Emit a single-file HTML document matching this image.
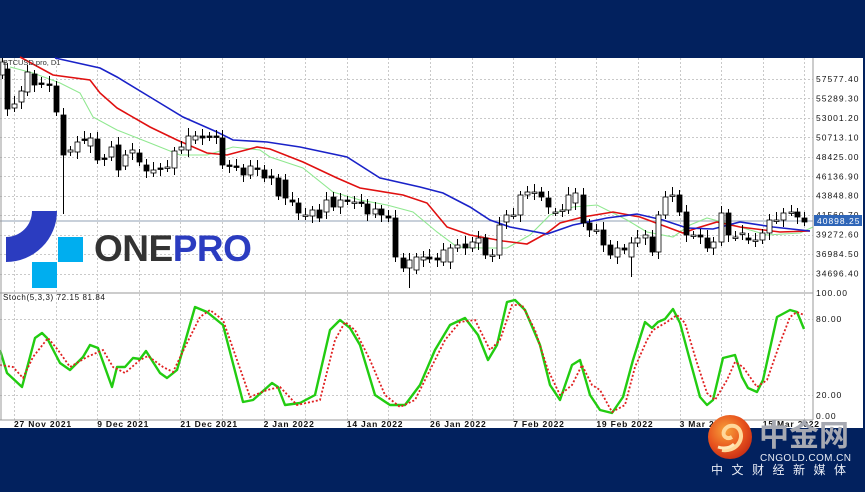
<!DOCTYPE html>
<html><head><meta charset="utf-8">
<style>
html,body{margin:0;padding:0;width:865px;height:487px;overflow:hidden;background:#02215e;font-family:"Liberation Sans",sans-serif;}
#wrap{position:absolute;left:0;top:0;width:865px;height:487px;}
svg text{font-family:"Liberation Sans",sans-serif;}
</style></head><body>
<div id="wrap">
<svg id="s" width="865" height="487" viewBox="0 0 865 487" xmlns="http://www.w3.org/2000/svg">
<rect x="0" y="0" width="865" height="487" fill="#02215e"/>
<rect x="0" y="58" width="863" height="370" fill="#ffffff"/>
<g id="grid" stroke="#c9c9c9" stroke-width="1" stroke-dasharray="2,2"></g>
<line x1="0" y1="221" x2="813" y2="221" stroke="#a8b4c4" stroke-width="1.2"/>
<g id="ma" fill="none" stroke-width="1.6"></g>
<g id="candles"></g>
<g id="stoch" fill="none"></g>
<line x1="0" y1="293" x2="813" y2="293" stroke="#999" stroke-width="1"/>
<line x1="0" y1="420" x2="813" y2="420" stroke="#999" stroke-width="1"/>
<line x1="813" y1="58" x2="813" y2="420" stroke="#999" stroke-width="1"/>
<line x1="1" y1="58" x2="1" y2="420" stroke="#999" stroke-width="1"/>
<g id="plabels" font-size="8.5" fill="#111" letter-spacing="1"></g>
<rect x="814" y="215" width="48" height="11" fill="#2f66b8"/>
<text x="817" y="224" font-size="8.5" fill="#fff" letter-spacing="1">40898.25</text>
<text x="3" y="65" font-size="7.5" fill="#333">BTCUSD.pro, D1</text>
<text x="3" y="300" font-size="8" fill="#111" letter-spacing="0.6">Stoch(5,3,3) 72.15 81.84</text>
<g id="dlabels" font-size="8.5" fill="#111" letter-spacing="0.8" font-weight="bold"></g>
<!-- ONEPRO logo -->
<path d="M6 262 A51 51 0 0 0 57 211 L32 211 A26 26 0 0 1 6 237 Z" fill="#2b3cc0"/>
<rect x="58" y="237" width="25" height="25" fill="#00aeef"/>
<rect x="32" y="262" width="25" height="26" fill="#00aeef"/>
<text x="94" y="261" font-size="37" font-weight="bold" fill="#333" letter-spacing="-0.5">ONE<tspan fill="#2b3cc0">PRO</tspan></text>
<!-- cngold logo -->
<defs><radialGradient id="g1" cx="0.4" cy="0.35" r="0.7"><stop offset="0" stop-color="#f7a23a"/><stop offset="0.6" stop-color="#e8531e"/><stop offset="1" stop-color="#c62d14"/></radialGradient></defs>
<circle cx="730" cy="437" r="22" fill="url(#g1)"/>
<path d="M722 450 C736 452 744 440 740 431 C737 424 727 424 724 431 C722 436 727 440 732 437" fill="none" stroke="#ffd89a" stroke-width="4"/>
<path d="M718 447 C724 449 730 448 734 444" fill="none" stroke="#ffe7b8" stroke-width="3"/>
<text x="759" y="446" font-size="30" font-weight="bold" fill="#a6a9b2" font-family="'Liberation Sans','Noto Sans CJK SC',sans-serif" style="font-family:'Liberation Sans','Noto Sans CJK SC',sans-serif">中金网</text>
<text x="760" y="461" font-size="10" fill="#e8ecf5" letter-spacing="0.4">CNGOLD.COM.CN</text>
<text x="711" y="474" font-size="12" fill="#e8ecf5" letter-spacing="8.5" style="font-family:'Liberation Sans','Noto Sans CJK SC',sans-serif">中文财经新媒体</text>
</svg>
</div>
<script>
var NS="http://www.w3.org/2000/svg";
function el(p,t,a){var e=document.createElementNS(NS,t);for(var k in a)e.setAttribute(k,a[k]);p.appendChild(e);return e;}
var grid=document.getElementById('grid');
for(var k=0;k<20;k++){var x=Math.round(14+41.6*k)+0.5;if(x>812)break;el(grid,'line',{x1:x,y1:58,x2:x,y2:420});}
var prices=["57577.40","55289.30","53001.20","50713.10","48425.00","46136.90","43848.80","41560.70","39272.60","36984.50","34696.40"];
var pl=document.getElementById('plabels');
for(var i=0;i<prices.length;i++){var y=79+19.45*i;el(grid,'line',{x1:0,y1:Math.round(y)+0.5,x2:813,y2:Math.round(y)+0.5});
 var t=el(pl,'text',{x:816,y:y+3});t.textContent=prices[i];}
[[319,"80.00"],[395,"20.00"]].forEach(function(a){el(grid,'line',{x1:0,y1:a[0]+0.5,x2:813,y2:a[0]+0.5});});
[[296,"100.00"],[322,"80.00"],[398,"20.00"],[419,"0.00"]].forEach(function(a){var t=el(pl,'text',{x:816,y:a[0]});t.textContent=a[1];});
var dl=document.getElementById('dlabels');
["27 Nov 2021","9 Dec 2021","21 Dec 2021","2 Jan 2022","14 Jan 2022","26 Jan 2022","7 Feb 2022","19 Feb 2022","3 Mar 2022","15 Mar 2022"].forEach(function(s,i){var t=el(dl,'text',{x:14+83.2*i,y:427});t.textContent=s;});
function poly(g,pts,col,extra){var a={points:pts.map(function(p){return p.join(',')}).join(' '),stroke:col};for(var k in extra)a[k]=extra[k];el(g,'polyline',a);}
var ma=document.getElementById('ma');
poly(ma,[[10,67],[33,73],[60,83],[80,93],[93,117],[117,130],[150,143],[180,155],[207,155],[233,147],[260,150],[270,157],[303,168],[333,192],[360,200],[387,205],[413,212],[437,232],[457,247],[483,248],[507,248],[530,235],[550,215],[573,207],[597,205],[627,220],[647,232],[673,237],[690,225],[707,218],[733,225],[767,235],[800,233],[813,227]],'#90e890',{'stroke-width':1.1});
poly(ma,[[20,57],[53,75],[90,80],[100,93],[117,108],[150,127],[177,140],[207,153],[227,155],[257,147],[270,149],[303,162],[337,178],[360,188],[403,195],[427,203],[447,227],[470,235],[503,241],[527,244],[547,233],[560,223],[583,217],[613,212],[640,217],[683,233],[697,228],[717,222],[740,227],[780,232],[810,231]],'#e01010');
poly(ma,[[55,58],[100,68],[117,77],[150,97],[183,117],[217,132],[233,140],[267,142],[300,147],[347,157],[380,178],[420,187],[443,193],[470,207],[490,220],[510,227],[547,234],[573,225],[607,218],[637,214],[663,220],[687,228],[713,229],[740,222],[773,227],[810,231]],'#1a22c8');
var C=[[2,75,62],[7,69,109],[14,108,104],[21,102,91],[27,92,72],[34,74,85],[41,83,84],[49,84,85],[56,86,112],[63,115,155],[70,152,150],[77,152,142],[84,139,140],[90,146,138],[97,139,160],[104,158,159],[111,157,147],[118,145,170],[125,166,155],[132,153,150],[139,153,162],[146,165,171],[153,173,170],[160,168,169],[167,168,167],[174,168,151],[181,150,147],[188,150,136],[195,140,136],[202,136,138],[209,136,137],[216,136,137],[222,138,165],[229,165,166],[236,166,167],[243,168,175],[250,175,166],[257,168,169],[264,170,178],[271,176,178],[278,178,196],[285,180,198],[292,200,202],[298,203,213],[305,216,215],[312,216,210],[319,210,218],[326,212,200],[333,197,207],[340,207,200],[347,200,201],[354,202,202],[361,202,203],[367,204,214],[375,214,209],[381,209,215],[388,216,218],[395,218,257],[403,258,268],[409,268,260],[416,270,257],[423,260,257],[429,257,259],[437,258,260],[443,262,250],[450,262,248],[457,248,245],[465,244,248],[472,248,242],[478,243,238],[485,238,255],[492,255,255],[499,255,225],[506,222,215],[513,215,215],[520,215,195],[527,195,192],[534,193,192],[541,192,197],[548,198,207],[555,212,212],[562,210,210],[568,210,195],[575,203,193],[583,195,223],[589,223,230],[596,230,230],[603,230,245],[610,245,255],[617,257,248],[624,248,250],[631,257,243],[637,243,238],[645,238,235],[652,237,252],[658,252,215],[665,215,197],[672,195,195],[679,195,212],[686,212,235],[693,235,235],[700,235,237],[707,238,248],[713,248,242],[721,242,213],[728,213,235],[735,237,237],[742,233,233],[748,238,240],[755,240,240],[762,240,233],[769,233,220],[776,220,220],[783,220,213],[791,212,212],[797,212,217],[804,218,222]];
var cg=document.getElementById('candles');
var lows={63:214,409:288,631:277,395:262};
C.forEach(function(c,i){var x=c[0],o=c[1],cl=c[2];var top=Math.min(o,cl),bot=Math.max(o,cl);
 var wt=top-4-(i*7%5),wb=bot+4+(i*3%6);if(lows[x])wb=lows[x];
 el(cg,'line',{x1:x+0.5,y1:wt,x2:x+0.5,y2:wb,stroke:'#000','stroke-width':1});
 var h=Math.max(bot-top,1.5);
 var black=cl>o;
 el(cg,'rect',{x:x-2,y:top,width:5,height:h,fill:black?'#000':'#fff',stroke:'#000','stroke-width':0.8});
});
var sg=document.getElementById('stoch');
var G=[[0,350],[7,373],[22,387],[35,338],[42,333],[47,338],[60,363],[70,370],[83,357],[90,345],[98,348],[112,387],[117,367],[125,367],[133,358],[140,359],[146,351],[160,373],[167,378],[177,370],[195,307],[207,312],[223,325],[243,402],[253,400],[272,383],[278,387],[285,405],[300,403],[315,395],[330,330],[340,320],[350,328],[360,345],[375,395],[390,405],[405,405],[420,385],[435,350],[450,325],[465,318],[478,335],[488,360],[497,345],[507,302],[515,300],[525,310],[540,345],[550,385],[560,400],[572,365],[580,360],[590,395],[600,410],[612,413],[623,397],[633,360],[645,322],[652,328],[658,322],[665,319],[673,309],[680,323],[688,353],[700,397],[707,405],[713,400],[723,358],[735,355],[742,377],[748,388],[757,392],[763,380],[777,317],[790,310],[797,312],[804,329]];
var R=[[0,365],[13,367],[23,378],[33,357],[48,338],[58,350],[70,367],[87,357],[103,350],[113,367],[125,373],[140,360],[148,356],[163,367],[173,372],[187,343],[200,317],[210,310],[223,320],[237,360],[250,397],[267,390],[280,387],[297,405],[320,400],[335,340],[345,322],[355,330],[370,360],[385,395],[400,407],[415,400],[430,370],[445,340],[460,322],[475,320],[490,350],[500,340],[512,305],[522,305],[535,330],[548,370],[560,395],[572,385],[582,365],[592,385],[600,390],[612,412],[625,405],[635,367],[647,340],[653,330],[667,322],[677,315],[685,323],[697,363],[707,393],[715,400],[727,380],[735,362],[743,367],[757,387],[767,380],[780,343],[790,317],[797,312],[804,315]];
poly(sg,G,'#22cc11',{'stroke-width':2.4,'stroke-linejoin':'round'});
poly(sg,R,'#e02020',{'stroke-width':1.8,'stroke-dasharray':'2,2'});
</script>
</body></html>
